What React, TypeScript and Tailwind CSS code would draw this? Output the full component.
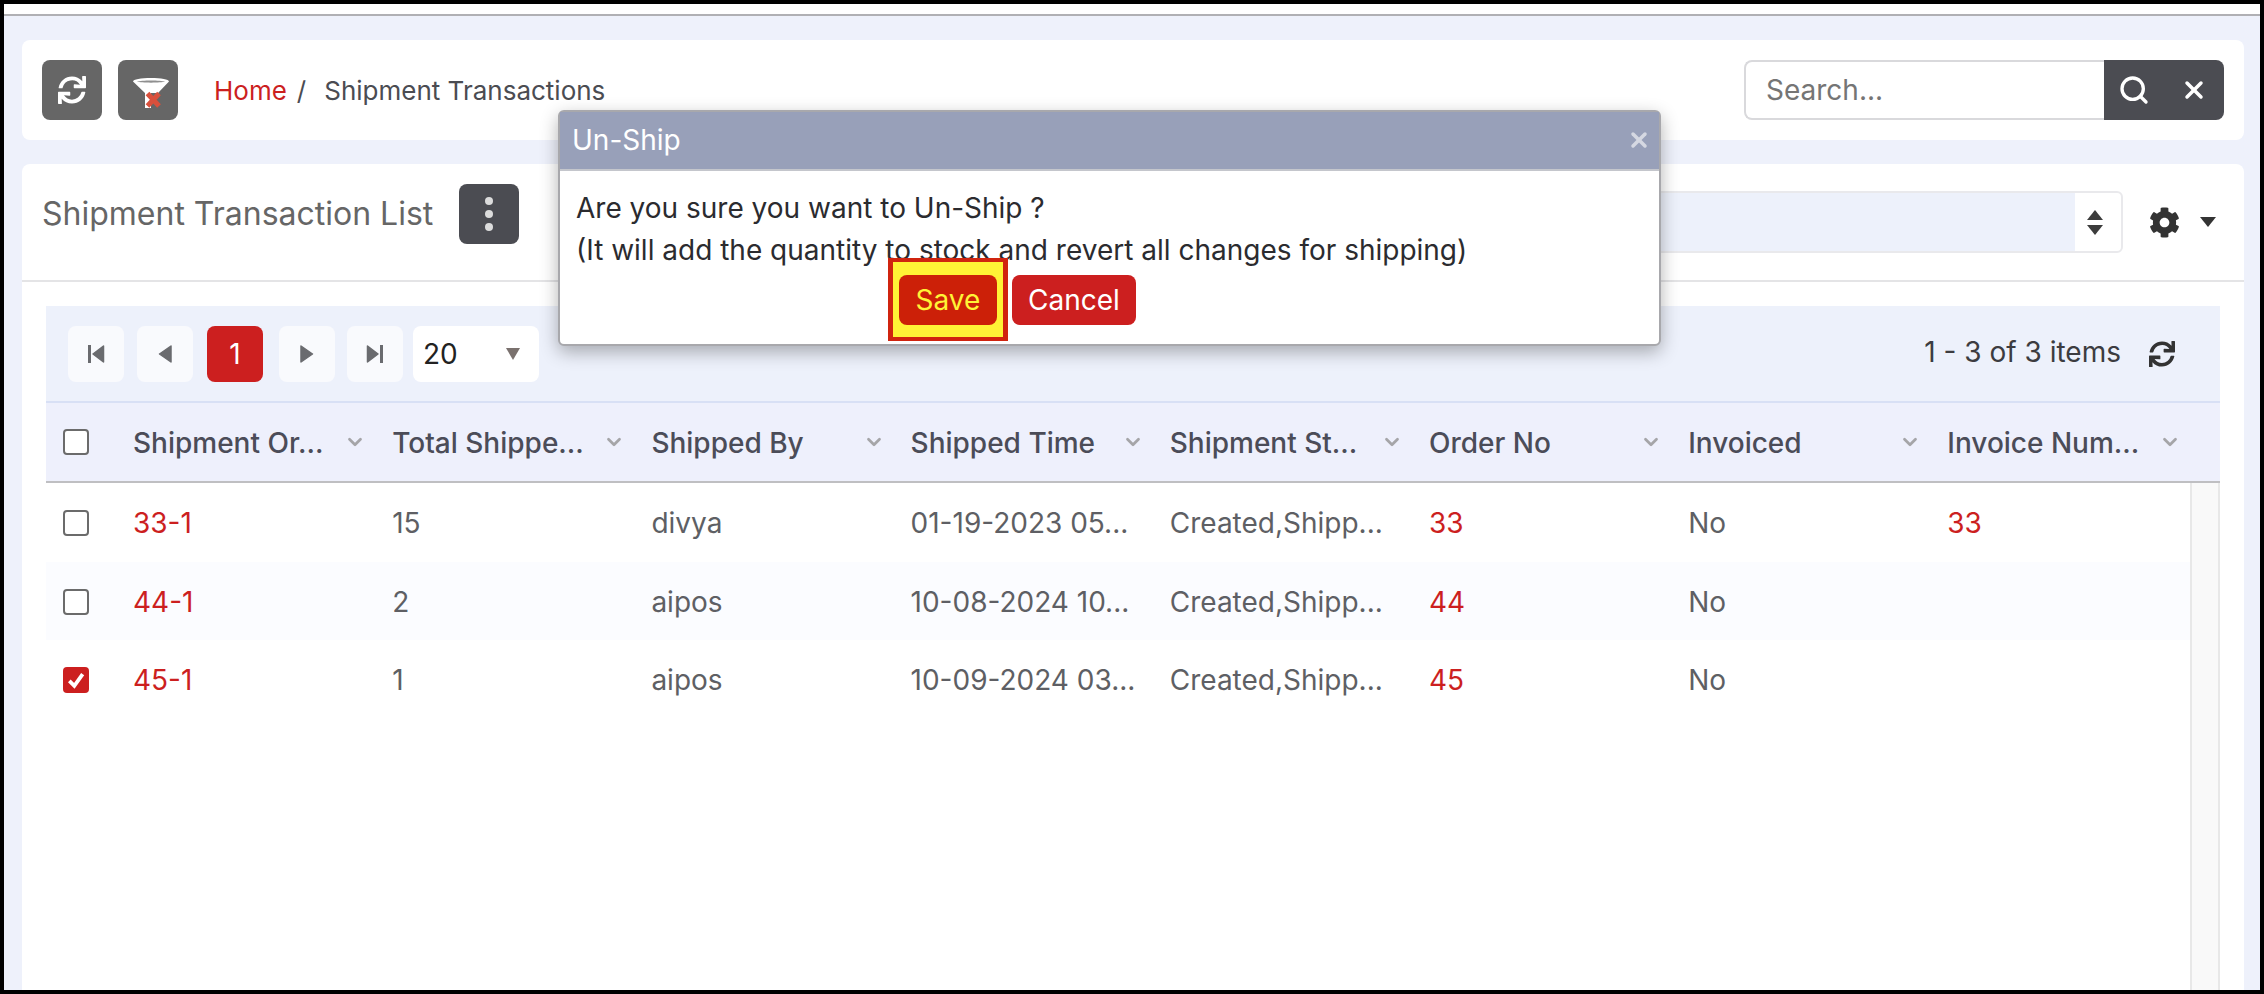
import React from "react";
import { FaSync, FaCog } from "react-icons/fa";
import { Search, X, ChevronDown } from "lucide-react";

const columns = ["Shipment Or...", "Total Shippe...", "Shipped By", "Shipped Time", "Shipment St...", "Order No", "Invoiced", "Invoice Num..."];

const rows = [
  { id: "33-1", total: "15", by: "divya", time: "01-19-2023 05...", status: "Created,Shipp...", order: "33", inv: "No", num: "33", alt: false, checked: false },
  { id: "44-1", total: "2", by: "aipos", time: "10-08-2024 10...", status: "Created,Shipp...", order: "44", inv: "No", num: "", alt: true, checked: false },
  { id: "45-1", total: "1", by: "aipos", time: "10-09-2024 03...", status: "Created,Shipp...", order: "45", inv: "No", num: "", alt: false, checked: true },
];

function Checkbox({ checked = false }: { checked?: boolean }) {
  return checked ? (
    <span className="flex h-[26px] w-[26px] items-center justify-center rounded-[4px] bg-[#cc1f1f]">
      <svg viewBox="0 0 24 24" className="h-[20px] w-[20px]" fill="none" stroke="#fff" strokeWidth="4.5">
        <path d="M4 13l6 6L20 5" />
      </svg>
    </span>
  ) : (
    <span className="block h-[26px] w-[26px] rounded-[4px] border-2 border-[#6b6b6b] bg-white" />
  );
}

function PagerIcon({ kind }: { kind: "first" | "prev" | "next" | "last" }) {
  const d: Record<string, React.ReactNode> = {
    first: (
      <>
        <rect x="1" y="1" width="3" height="18" />
        <path d="M16.500 2v16L6 10z" stroke="#6a6b6f" strokeWidth="1.500" strokeLinejoin="round" />
      </>
    ),
    prev: <path d="M15 2v16L3.500 10z" stroke="#6a6b6f" strokeWidth="1.500" strokeLinejoin="round" />,
    next: <path d="M3 2v16l11.500-8z" stroke="#6a6b6f" strokeWidth="1.500" strokeLinejoin="round" />,
    last: (
      <>
        <path d="M1.500 2v16L12 10z" stroke="#6a6b6f" strokeWidth="1.500" strokeLinejoin="round" />
        <rect x="14" y="1" width="3" height="18" />
      </>
    ),
  };
  return (
    <svg viewBox="0 0 18 20" className="h-[20px] w-[18px]" fill="#6a6b6f">
      {d[kind]}
    </svg>
  );
}

function PagerButton({ kind }: { kind: "first" | "prev" | "next" | "last" }) {
  return (
    <button className="flex h-[56px] w-[56px] items-center justify-center rounded-[8px] bg-[#f9fafd]">
      <PagerIcon kind={kind} />
    </button>
  );
}

function FunnelIcon() {
  return (
    <svg viewBox="0 0 36 30" className="mt-[6px] ml-[6px] h-[30px] w-[36px]">
      <path d="M0 3.500C0 1.500 8 0 18 0s18 1.500 18 3.500L25 15h-7v15h-6V15z" fill="#fff" />
      <path d="M4 3.500C8 2 28 2 32 3.500 28 5 8 5 4 3.500z" fill="#8f8f8f" />
      <path d="M14.500 15.500l11.500 12.500M26 15.500L14.500 28" stroke="#d9503c" strokeWidth="5" />
    </svg>
  );
}

export default function App() {
  return (
    <div
      className="flex h-[994px] w-[2264px] flex-col overflow-hidden border-t-4 border-r-4 border-b-4 border-l-4 border-black bg-[#eef1fb] text-[#4b4c52]"
      style={{ fontFamily: "Inter, 'Noto Sans', sans-serif" }}
    >
      <div className="h-[12px] shrink-0 border-b-2 border-[#b0b0b4] bg-white" />
      <div className="relative flex min-h-0 flex-1 flex-col gap-[24px] pt-[24px] pr-[16px] pl-[18px]">
        {/* Breadcrumb card */}
        <div className="flex h-[100px] shrink-0 items-center justify-between rounded-[8px] bg-white pr-[20px] pl-[20px]">
          <div className="flex items-center">
            <button className="flex h-[60px] w-[60px] items-center justify-center rounded-[8px] bg-[#666666] text-white">
              <FaSync className="h-[28px] w-[28px]" />
            </button>
            <button className="ml-[16px] flex h-[60px] w-[60px] items-center justify-center rounded-[8px] bg-[#666666]">
              <FunnelIcon />
            </button>
            <span className="ml-[36px] text-[26px] text-[#cc1f1f]">Home</span>
            <span className="ml-[10px] text-[26px] text-[#4b4c52]">/</span>
            <span className="ml-[18px] text-[26px] text-[#4b4c52]">Shipment Transactions</span>
          </div>
          <div className="flex h-[60px] w-[480px]">
            <div className="flex flex-1 items-center rounded-l-[8px] border-2 border-r-0 border-[#d9d9dc] bg-white pl-[20px] text-[28px] text-[#757575]">
              Search...
            </div>
            <div className="flex w-[120px] items-center justify-between rounded-r-[8px] bg-[#4b4c52] pr-[16px] pl-[14px] text-white">
              <Search className="h-[32px] w-[32px]" strokeWidth={2.5} />
              <X className="h-[28px] w-[28px]" strokeWidth={3} />
            </div>
          </div>
        </div>

        {/* List card */}
        <div className="flex min-h-0 flex-1 flex-col rounded-t-[8px] bg-white">
          <div className="flex h-[118px] shrink-0 items-center justify-between border-b-2 border-[#e4e4e6] pr-[28px] pl-[20px]">
            <div className="mb-[17px] flex items-center">
              <span className="text-[32px] text-[#666666]">Shipment Transaction List</span>
              <button className="ml-[26px] flex h-[60px] w-[60px] flex-col items-center justify-center gap-[5px] rounded-[8px] bg-[#4b4c52]">
                <span className="h-[8px] w-[8px] rounded-full bg-[#dcdcdc]" />
                <span className="h-[8px] w-[8px] rounded-full bg-[#dcdcdc]" />
                <span className="h-[8px] w-[8px] rounded-full bg-[#dcdcdc]" />
              </button>
            </div>
            <div className="flex items-center">
              <div className="flex h-[62px] w-[500px] rounded-[6px] border-2 border-[#e9e9ec] bg-white">
                <div className="flex-1 bg-[#edf1fb]" />
                <div className="flex w-[46px] flex-col items-center justify-center gap-[5px] pr-[6px]">
                  <svg viewBox="0 0 16 10" className="h-[10px] w-[16px]" fill="#3c3c3c"><path d="M8 0l8 10H0z" /></svg>
                  <svg viewBox="0 0 16 10" className="h-[10px] w-[16px]" fill="#3c3c3c"><path d="M8 10L0 0h16z" /></svg>
                </div>
              </div>
              <FaCog className="ml-[26px] h-[31px] w-[31px] text-[#333333]" />
              <svg viewBox="0 0 16 10" className="ml-[20px] h-[10px] w-[16px]" fill="#333333"><path d="M0 0h16L8 10z" /></svg>
            </div>
          </div>

          <div className="flex min-h-0 flex-1 flex-col pt-[24px] pr-[24px] pl-[24px]">
            {/* Pager */}
            <div className="flex h-[97px] shrink-0 items-center justify-between border-b-2 border-[#d8e0f5] bg-[#edf1fb] pr-[45px] pl-[22px]">
              <div className="flex items-center">
                <PagerButton kind="first" />
                <span className="w-[13px]" />
                <PagerButton kind="prev" />
                <button className="ml-[14px] flex h-[56px] w-[56px] items-center justify-center rounded-[8px] bg-[#cc1f1f] text-[28px] text-white">1</button>
                <span className="w-[16px]" />
                <PagerButton kind="next" />
                <span className="w-[12px]" />
                <PagerButton kind="last" />
                <div className="ml-[10px] flex h-[56px] w-[126px] items-center justify-between rounded-[8px] bg-white pr-[19px] pl-[10px] text-[28px] text-[#222222]">
                  20
                  <svg viewBox="0 0 14 12" className="h-[12px] w-[14px]" fill="#7a716e"><path d="M0 0h14L7 12z" /></svg>
                </div>
              </div>
              <div className="flex items-center text-[#3c3c40]">
                <span className="mb-[3px] ml-[1px] text-[28px]">1 - 3 of 3 items</span>
                <FaSync className="ml-[28px] h-[26px] w-[26px] text-[#333333]" />
              </div>
            </div>

            {/* Table header */}
            <div className="flex h-[80px] shrink-0 items-center border-b-2 border-[#bfbfc2] bg-[#eef0fc]">
              <div className="flex w-[87px] shrink-0 items-center pl-[17px]"><Checkbox /></div>
              {columns.map((c) => (
                <div key={c} className="flex w-[259.2px] shrink-0 items-center justify-between pr-[26px]">
                  <span className="mt-[1px] text-[28px] font-medium whitespace-nowrap text-[#4b4c58]">{c}</span>
                  <ChevronDown className="h-[22px] w-[22px] text-[#a5a5a8]" strokeWidth={3} />
                </div>
              ))}
            </div>

            {/* Table body */}
            <div className="flex min-h-0 flex-1">
              <div className="flex min-w-0 flex-1 flex-col">
                {rows.map((r) => (
                  <div key={r.id} className={`flex h-[78.700px] items-center pt-[1px] text-[28px] text-[#5e5f64] ${r.alt ? "bg-[#fbfcff]" : "bg-white"}`}>
                    <div className="flex w-[87px] shrink-0 items-center pl-[17px]"><Checkbox checked={r.checked} /></div>
                    <div className="w-[259.2px] shrink-0 text-[#cc1f1f]">{r.id}</div>
                    <div className="w-[259.2px] shrink-0">{r.total}</div>
                    <div className="w-[259.2px] shrink-0">{r.by}</div>
                    <div className="w-[259.2px] shrink-0 whitespace-nowrap">{r.time}</div>
                    <div className="w-[259.2px] shrink-0 whitespace-nowrap">{r.status}</div>
                    <div className="w-[259.2px] shrink-0 text-[#cc1f1f]">{r.order}</div>
                    <div className="w-[259.2px] shrink-0">{r.inv}</div>
                    <div className="w-[259.2px] shrink-0 text-[#cc1f1f]">{r.num}</div>
                  </div>
                ))}
              </div>
              <div className="w-[30px] shrink-0 border-x-2 border-[#e8e8e8] bg-[#f9f9f9]" />
            </div>
          </div>
        </div>

        {/* Dialog */}
        <div className="absolute top-[94px] left-[554px] z-10 flex h-[236px] w-[1103px] flex-col overflow-visible rounded-[6px] border-2 border-[#a8a8ac] bg-white shadow-[0_6px_18px_rgba(0,0,0,0.3)]">
          <div className="flex h-[59px] shrink-0 items-center justify-between border-b-2 border-[#c4c6cc] bg-[#98a0b9] pr-[8px] pb-[2px] pl-[12px] text-white">
            <span className="text-[28px]">Un-Ship</span>
            <X className="h-[24px] w-[24px] text-[#d5d8e2]" strokeWidth={3.5} />
          </div>
          <div className="flex flex-col pl-[16px] text-[#2b2b2f]">
            <div className="mt-[16px] text-[28px] leading-[42px]">Are you sure you want to Un-Ship ?</div>
            <div className="text-[28px] leading-[42px]">(It will add the quantity to stock and revert all changes for shipping)</div>
            <div className="mt-[-13px] ml-[312px] flex items-start">
              <div className="rounded-none border-x-[5px] border-y-[4px] border-[#d0240f] bg-[#fff336] px-[6px] pt-[13px] pb-[12px]">
                <button className="flex h-[50px] w-[98px] items-center justify-center rounded-[8px] bg-[#cc2008] text-[28px] text-[#fff336]">Save</button>
              </div>
              <button className="mt-[17px] ml-[4px] flex h-[50px] w-[124px] items-center justify-center rounded-[8px] bg-[#cc1f1f] text-[28px] text-white">Cancel</button>
            </div>
          </div>
        </div>
      </div>
    </div>
  );
}
